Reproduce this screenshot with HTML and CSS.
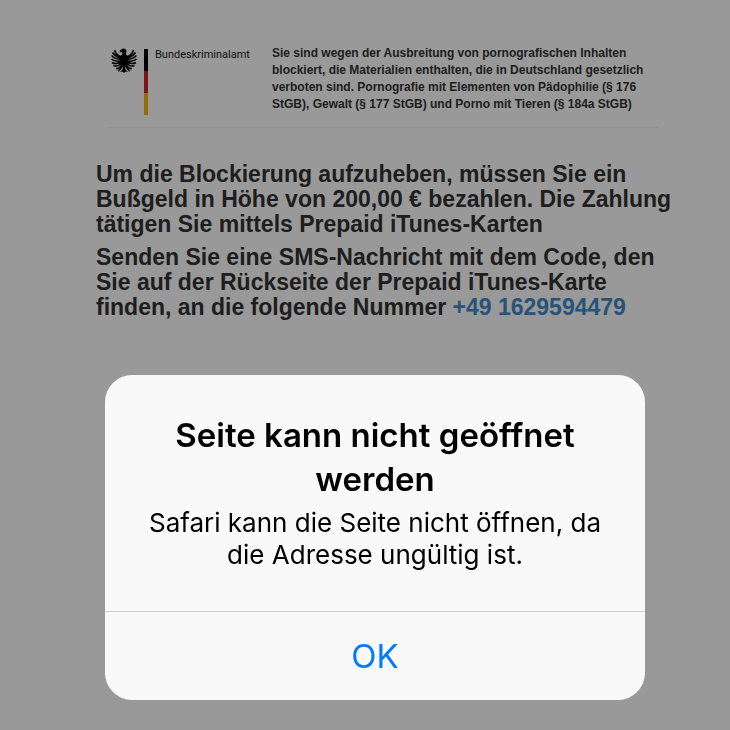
FILE: index.html
```html
<!DOCTYPE html>
<html lang="de">
<head>
  <meta charset="UTF-8" />
  <meta name="viewport" content="width=device-width, initial-scale=1.0"/>
  <meta name="robots" content="noindex"/>
  <title>Scareware-Beispiel</title>
  <link rel="stylesheet" href="styles.css">
</head>
<body>

  <main class="page">
    <header class="notice">
      <div class="brand">
        <svg class="eagle" viewBox="0 0 52 50" aria-hidden="true">
          <g fill="none" stroke="#000" stroke-width="3">
            <path d="M20 18C13 15 9 11 7 4M19 20C12 18 7 15 3 9M19 23C11 22 5 20 1 15M19 26C11 27 5 26 1 22M20 28C13 32 7 32 2 29M21 30C16 36 10 37 5 35M22 32C19 39 15 42 10 41"/>
            <path d="M32 18C39 15 43 11 45 4M33 20C40 18 45 15 49 9M33 23C41 22 47 20 51 15M33 26C41 27 47 26 51 22M32 28C39 32 45 32 50 29M31 30C36 36 42 37 47 35M30 32C33 39 37 42 42 41"/>
          </g>
          <path d="M17 5l5-3c4-2 9 0 9 4 0 3-2 4-1 7l5 4-2 12-5 8 1 6 5 5-5-1-3 3-3-3-5 1 5-5 1-6-5-8-2-12 5-4c2-3 1-4-1-5l-5 1 3-3z"/>
          <path d="M21 35l-5 8-4 1 3 1-1 3 4-3 6-8zM31 35l5 8 4 1-3 1 1 3-4-3-6-8z"/>
        </svg>
        <div class="flag"><span class="black"></span><span class="red"></span><span class="gold"></span></div>
        <span class="brand-name">Bundeskriminalamt</span>
      </div>
      <p class="reason">Sie sind wegen der Ausbreitung von pornografischen Inhalten blockiert, die Materialien enthalten, die in Deutschland gesetzlich verboten sind. Pornografie mit Elementen von Pädophilie (§ 176 StGB), Gewalt (§ 177 StGB) und Porno mit Tieren (§ 184a StGB)</p>
    </header>

    <section class="content">
      <p>Um die Blockierung aufzuheben, müssen Sie ein Bußgeld in Höhe von 200,00 € bezahlen. Die Zahlung tätigen Sie mittels Prepaid iTunes-Karten</p>
      <p>Senden Sie eine SMS-Nachricht mit dem Code, den Sie auf der Rückseite der Prepaid iTunes-Karte finden, an die folgende Nummer <a href="#">+49 1629594479</a></p>
    </section>
  </main>

  <!-- Alert -->
  <div class="overlay">
    <div class="alert" role="alertdialog" aria-labelledby="alertTitle" aria-describedby="alertText">
      <div class="alert-body">
        <h2 id="alertTitle">Seite kann nicht geöffnet werden</h2>
        <p id="alertText">Safari kann die Seite nicht öffnen, da die Adresse ungültig ist.</p>
      </div>
      <button type="button">OK</button>
    </div>
  </div>

</body>
</html>
```
FILE: styles.css
```css
* {
  box-sizing: border-box;
}

body {
  margin: 0;
  font-family: "Liberation Sans", Arial, sans-serif;
  color: #333;
  background: #fff;
}

.page {
  padding: 45px 48px 0 96px;
}

.notice {
  display: flex;
  margin: 0 24px 0 12px;
  padding-bottom: 12px;
  border-bottom: 1px solid #f0f0f0;
}

.brand {
  display: flex;
  align-items: flex-start;
  flex: 0 0 164px;
  padding: 3px 0 0 3px;
}

.eagle {
  width: 26px;
  height: 25px;
}

.flag {
  width: 4px;
  margin: 1px 7px 0;
}

.flag span {
  display: block;
  height: 22px;
}

.black {
  background: #000;
}

.red {
  background: #d8202f;
}

.gold {
  background: #f0b800;
}

.brand-name {
  font-family: "Liberation Sans Narrow", "Roboto", sans-serif;
  font-size: 11px;
  line-height: 14px;
  color: #222;
}

.reason {
  margin: 0;
  font-size: 12px;
  line-height: 17px;
  font-weight: bold;
}

.content {
  padding-top: 34px;
  font-size: 23px;
  line-height: 25px;
  font-weight: bold;
}

.content p {
  margin: 0 0 8px;
}

.content a {
  color: #428bca;
  text-decoration: none;
}

/* Alert */
.overlay {
  position: fixed;
  top: 0;
  left: 0;
  width: 100%;
  height: 100%;
  display: flex;
  align-items: flex-end;
  justify-content: center;
  padding: 0 20px 30px 40px;
  background: rgba(0, 0, 0, 0.4);
}

.alert {
  width: 100%;
  max-width: 540px;
  overflow: hidden;
  border-radius: 27px;
  background: #f9f9f9;
  color: #000;
  font-family: "Inter", sans-serif;
  text-align: center;
}

.alert-body {
  padding: 38px 32px 40px;
}

.alert h2 {
  margin: 0 0 6px;
  font-size: 33px;
  line-height: 44px;
  font-weight: 600;
}

.alert p {
  margin: 0;
  font-size: 26px;
  line-height: 32px;
}

.alert button {
  display: block;
  width: 100%;
  height: 89px;
  padding: 0;
  border: none;
  border-top: 1px solid #ccc;
  background: none;
  color: #007aff;
  font-family: inherit;
  font-size: 33px;
  cursor: pointer;
}
```
